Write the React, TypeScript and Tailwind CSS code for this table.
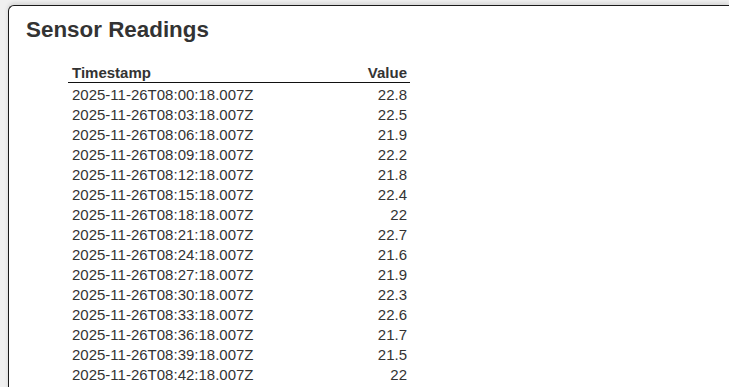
import React from "react";

const values = ["22.8","22.5","21.9","22.2","21.8","22.4","22","22.7","21.6","21.9","22.3","22.6","21.7","21.5","22"];

function ts(i: number) {
  const m = i * 3;
  const h = 8 + Math.floor(m / 60);
  const mm = m % 60;
  return `2025-11-26T${String(h).padStart(2, "0")}:${String(mm).padStart(2, "0")}:18.007Z`;
}

export default function App() {
  return (
    <div className="h-[387px] overflow-hidden bg-[#f0f0f0] pt-[5px] pl-[8px]" style={{ fontFamily: '"Liberation Sans", Arial, sans-serif' }}>
      <div className="h-[400px] rounded-tl-[6px] border-l border-t border-[#1a1a1a] bg-white pt-[11px] pl-[17px] text-[#333] shadow-[0_-2px_4px_rgba(0,0,0,0.12)]">
        <h2 className="text-[22.4px] font-bold leading-[26px] m-0">Sensor Readings</h2>
        <table className="mt-[20px] ml-[42px] w-[342px] border-collapse text-[15px] leading-[20px]">
          <thead>
            <tr className="border-b border-[#111]">
              <th className="pl-[4px] pr-[3px] pt-[1px] text-left font-bold leading-[18px]">Timestamp</th>
              <th className="pl-[4px] pr-[3px] pt-[1px] text-right font-bold leading-[18px]">Value</th>
            </tr>
          </thead>
          <tbody>
            {values.map((v, i) => (
              <tr key={i}>
                <td className={`pl-[4px] pr-[3px] text-left ${i === 0 ? "pt-[2px]" : ""}`}>{ts(i)}</td>
                <td className={`pl-[4px] pr-[3px] text-right ${i === 0 ? "pt-[2px]" : ""}`}>{v}</td>
              </tr>
            ))}
          </tbody>
        </table>
      </div>
    </div>
  );
}
